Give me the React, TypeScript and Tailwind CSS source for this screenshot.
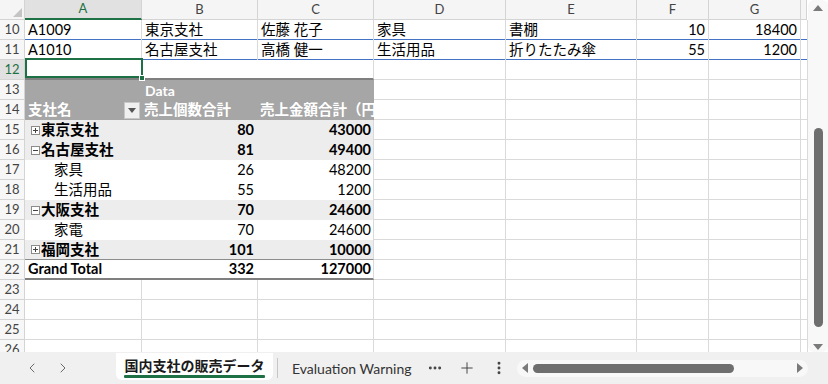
import React from 'react';
import { ChevronLeft, ChevronRight, MoreHorizontal, Plus, MoreVertical } from 'lucide-react';

const W = ['w-[117px]', 'w-[116px]', 'w-[116px]', 'w-[132px]', 'w-[131px]', 'w-[72px]', 'w-[92px]', 'w-[6px]'];
const LETTERS = ['A', 'B', 'C', 'D', 'E', 'F', 'G', ''];

const RowHead = ({ n, selected }: { n: number; selected?: boolean }) => (
    <div
        className={`w-[25px] shrink-0 flex items-center justify-center text-[13px] border-r border-b border-[#d4d4d4] ${
            selected ? 'bg-[#e1e1e1] text-[#1e7145]' : 'bg-[#f7f7f7] text-[#444]'
        }`}
    >
        {n}
    </div>
);

const Cell = ({ i, text, right, blue }: { i: number; text?: string; right?: boolean; blue?: boolean }) => (
    <div
        className={`${W[i]} shrink-0 flex items-center overflow-hidden whitespace-nowrap px-[3px] text-[14.5px] text-black border-r border-r-[#dadada] ${
            blue ? 'shadow-[inset_0_-1px_0_#4472c4]' : 'border-b border-b-[#dadada]'
        } ${right ? 'justify-end' : 'justify-start'}`}
    >
        {text}
    </div>
);

const Toggle = ({ open }: { open: boolean }) => (
    <svg width="9" height="9" viewBox="0 0 9 9" className="shrink-0">
        <rect x="0.5" y="0.5" width="8" height="8" fill="#fff" stroke="#8c8c8c" />
        <line x1="2" y1="4.5" x2="7" y2="4.5" stroke="#444" />
        {!open && <line x1="4.5" y1="2" x2="4.5" y2="7" stroke="#444" />}
    </svg>
);

type PivotRow = {
    n: number;
    label: string;
    b: string;
    c: string;
    kind: 'group' | 'item' | 'total';
    open?: boolean;
};

const PIVOT: PivotRow[] = [
    { n: 15, label: '東京支社', b: '80', c: '43000', kind: 'group', open: false },
    { n: 16, label: '名古屋支社', b: '81', c: '49400', kind: 'group', open: true },
    { n: 17, label: '家具', b: '26', c: '48200', kind: 'item' },
    { n: 18, label: '生活用品', b: '55', c: '1200', kind: 'item' },
    { n: 19, label: '大阪支社', b: '70', c: '24600', kind: 'group', open: true },
    { n: 20, label: '家電', b: '70', c: '24600', kind: 'item' },
    { n: 21, label: '福岡支社', b: '101', c: '10000', kind: 'group', open: false },
    { n: 22, label: 'Grand Total', b: '332', c: '127000', kind: 'total' },
];

const Rest = ({ from = 3 }: { from?: number }) => (
    <>
        {[3, 4, 5, 6, 7].filter((i) => i >= from).map((i) => (
            <Cell key={i} i={i} />
        ))}
    </>
);

const Tri = ({ dir }: { dir: 'up' | 'down' | 'left' | 'right' }) => {
    const pts = {
        up: '0,7 5,1 10,7',
        down: '0,1 10,1 5,7',
        left: '7,0 7,10 1,5',
        right: '1,0 1,10 7,5',
    }[dir];
    const vert = dir === 'up' || dir === 'down';
    return (
        <svg width={vert ? 10 : 8} height={vert ? 8 : 10} viewBox={vert ? '0 0 10 8' : '0 0 8 10'} className="shrink-0">
            <polygon points={pts} fill="#7a7a7a" />
        </svg>
    );
};

const App: React.FC = () => {
    return (
        <div className="w-[828px] h-[384px] overflow-hidden bg-white font-['Lato','Noto_Sans_CJK_JP',sans-serif] flex flex-col">
            <div className="flex h-[352px] overflow-hidden">
                <div className="w-[808px] shrink-0 flex flex-col">
                    {/* column headers */}
                    <div className="flex h-[20px] shrink-0">
                        <div className="w-[25px] shrink-0 relative bg-[#f5f5f5] border-r border-b border-[#d4d4d4] flex items-end justify-end pr-[2px] pb-[2px]">
                            <svg width="9" height="9" viewBox="0 0 9 9">
                                <polygon points="9,0 9,9 0,9" fill="#c4c4c4" />
                            </svg>
                        </div>
                        {LETTERS.map((l, i) => (
                            <div
                                key={i}
                                className={`${W[i]} shrink-0 flex items-center justify-center text-[13px] border-r border-r-[#d4d4d4] ${
                                    i === 0
                                        ? 'bg-[#e1e1e1] text-[#1e7145] border-b-2 border-b-[#1e7145]'
                                        : 'bg-[#f5f5f5] text-[#444] border-b border-b-[#d4d4d4]'
                                }`}
                            >
                                {l}
                            </div>
                        ))}
                    </div>

                    {/* rows 10, 11 */}
                    <div className="flex h-[20px] shrink-0">
                        <RowHead n={10} />
                        {['A1009', '東京支社', '佐藤 花子', '家具', '書棚', '10', '18400', ''].map((t, i) => (
                            <Cell key={i} i={i} text={t} right={i === 5 || i === 6} blue />
                        ))}
                    </div>
                    <div className="flex h-[20px] shrink-0">
                        <RowHead n={11} />
                        {['A1010', '名古屋支社', '高橋 健一', '生活用品', '折りたたみ傘', '55', '1200', ''].map((t, i) => (
                            <Cell key={i} i={i} text={t} right={i === 5 || i === 6} blue />
                        ))}
                    </div>

                    {/* row 12, selected A12 */}
                    <div className="flex h-[20px] shrink-0">
                        <RowHead n={12} selected />
                        <div className="w-[117px] shrink-0 relative border-b-2 border-b-[#7f7f7f]">
                            <div className="absolute -top-[2px] left-0 -right-[1px] bottom-0 border-2 border-[#1e7145]" />
                            <div className="absolute -right-[3px] -bottom-[3px] w-[6px] h-[6px] bg-[#1e7145] border border-white" />
                        </div>
                        <div className="w-[116px] shrink-0 border-b-2 border-b-[#7f7f7f]" />
                        <div className="w-[116px] shrink-0 border-r border-r-[#dadada] border-b-2 border-b-[#7f7f7f]" />
                        <Rest />
                    </div>

                    {/* pivot header rows */}
                    <div className="flex h-[20px] shrink-0">
                        <RowHead n={13} />
                        <div className="w-[349px] shrink-0 flex bg-[#a6a6a6] text-white font-bold text-[14px]">
                            <div className="w-[117px] shrink-0" />
                            <div className="w-[116px] shrink-0 pl-[3px] flex items-center">Data</div>
                        </div>
                        <Rest />
                    </div>
                    <div className="flex h-[20px] shrink-0">
                        <RowHead n={14} />
                        <div className="w-[349px] shrink-0 flex bg-[#a6a6a6] text-white font-bold text-[14.5px] whitespace-nowrap">
                            <div className="w-[117px] shrink-0 pl-[3px] pr-[2px] flex items-center justify-between">
                                <span>支社名</span>
                                <span className="w-[16px] h-[17px] bg-[#f0f0f0] border border-[#c8c8c8] flex items-center justify-center">
                                    <svg width="8" height="5" viewBox="0 0 8 5">
                                        <polygon points="0,0 8,0 4,5" fill="#555" />
                                    </svg>
                                </span>
                            </div>
                            <div className="w-[116px] shrink-0 pl-[2px] flex items-center overflow-hidden">売上個数合計</div>
                            <div className="w-[116px] shrink-0 pl-[2px] flex items-center overflow-hidden">売上金額合計（円）</div>
                        </div>
                        <Rest />
                    </div>

                    {/* pivot body */}
                    {PIVOT.map((r) => {
                        const bg = r.kind === 'group' ? 'bg-[#ededed]' : 'bg-white';
                        const border =
                            r.kind === 'total'
                                ? 'border-b-2 border-b-[#7f7f7f]'
                                : r.n === 21
                                ? 'border-b border-b-[#8c8c8c]'
                                : '';
                        const weight = r.kind === 'item' ? 'font-normal' : 'font-bold';
                        return (
                            <div key={r.n} className="flex h-[20px] shrink-0">
                                <RowHead n={r.n} />
                                <div
                                    className={`w-[349px] shrink-0 flex text-[14.5px] text-black whitespace-nowrap border-r border-r-[#dadada] ${bg} ${border} ${weight}`}
                                >
                                    <div
                                        className={`w-[117px] shrink-0 flex items-center gap-[1px] ${
                                            r.kind === 'group' ? 'pl-[6px]' : r.kind === 'item' ? 'pl-[29px]' : 'pl-[3px]'
                                        }`}
                                    >
                                        {r.kind === 'group' && <Toggle open={!!r.open} />}
                                        <span>{r.label}</span>
                                    </div>
                                    <div className="w-[116px] shrink-0 flex items-center justify-end pr-[4px]">{r.b}</div>
                                    <div className="w-[115px] shrink-0 flex items-center justify-end pr-[2px]">{r.c}</div>
                                </div>
                                <Rest />
                            </div>
                        );
                    })}

                    {/* empty rows */}
                    {[23, 24, 25, 26].map((n) => (
                        <div key={n} className="flex h-[20px] shrink-0">
                            <RowHead n={n} />
                            {[0, 1, 2, 3, 4, 5, 6, 7].map((i) => (
                                <Cell key={i} i={i} />
                            ))}
                        </div>
                    ))}
                </div>

                {/* vertical scrollbar */}
                <div className="w-[20px] shrink-0 bg-[#f8f8f8] rounded-[6px] flex flex-col items-center">
                    <div className="mt-[4px]">
                        <Tri dir="up" />
                    </div>
                    <div className="mt-[116px] w-[9px] h-[199px] rounded-full bg-[#6e6e6e]" />
                    <div className="mt-[16px]">
                        <Tri dir="down" />
                    </div>
                </div>
            </div>

            {/* sheet tabs bar */}
            <div className="h-[32px] shrink-0 bg-[#f0f0f0] flex items-center">
                <div className="w-[116px] shrink-0 flex items-center pl-[24px] text-[#6a6a6a]">
                    <ChevronLeft size={16} strokeWidth={1.5} />
                    <ChevronRight size={16} strokeWidth={1.5} className="ml-[15px]" />
                </div>
                <div className="w-[157px] h-[27px] self-start mt-[1px] shrink-0 bg-white rounded-b-[6px] px-[8px] pt-[4px] flex flex-col">
                    <span className="leading-[18px] text-[14px] font-semibold text-[#1a1a1a] whitespace-nowrap text-center">
                        国内支社の販売データ
                    </span>
                    <div className="h-[3px] w-full bg-[#1e7145] rounded-[1px]" />
                </div>
                <div className="ml-[4px] w-px h-[20px] bg-[#c6c6c6] shrink-0" />
                <div className="w-[141px] shrink-0 pl-[14px] text-[14px] text-[#333] whitespace-nowrap">Evaluation Warning</div>
                <div className="w-[32px] shrink-0 flex justify-center text-[#444]">
                    <MoreHorizontal size={16} strokeWidth={2.4} />
                </div>
                <div className="w-[32px] shrink-0 flex justify-center text-[#444]">
                    <Plus size={18} strokeWidth={1.3} />
                </div>
                <div className="w-[32px] shrink-0 flex justify-center text-[#444]">
                    <MoreVertical size={16} strokeWidth={2.4} />
                </div>
                <div className="ml-[2px] w-[291px] h-[17px] shrink-0 rounded-full bg-[#f8f8f8] flex items-center pl-[4px]">
                    <Tri dir="left" />
                    <div className="ml-[4px] w-[201px] h-[9px] rounded-full bg-[#6e6e6e]" />
                    <div className="ml-[62px]">
                        <Tri dir="right" />
                    </div>
                </div>
            </div>
        </div>
    );
};

export default App;
